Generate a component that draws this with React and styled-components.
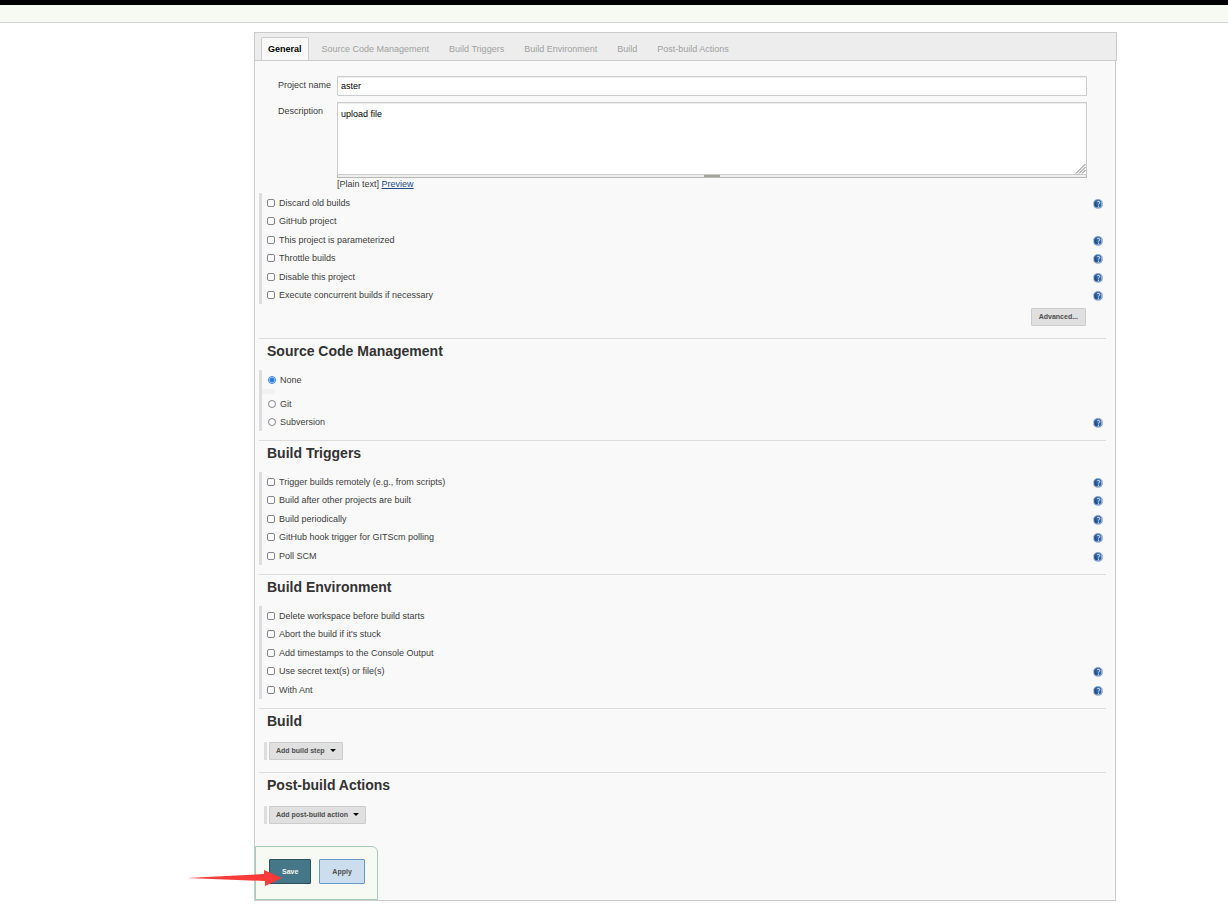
import React from 'react';
import styled, { createGlobalStyle } from 'styled-components';

const GlobalStyle = createGlobalStyle`
  * {
    box-sizing: border-box;
  }

  body {
    margin: 0;
    background: #fff;
    color: #3c3c3c;
    font-family: 'Liberation Sans', Arial, sans-serif;
    font-size: 9px;
    line-height: 12px;
  }

  button, input, textarea {
    font-family: inherit;
  }
`;

const TopBar = styled.header`
  height: 5px;
  background: #000;
`;

const Breadcrumbs = styled.nav`
  height: 18px;
  background: #f6faf2;
  border-bottom: 1px solid #d3d7cf;
`;

const Main = styled.main`
  margin: 9px 112px 10px 254px;
`;

const TabBar = styled.nav`
  display: flex;
  align-items: flex-end;
  gap: 6px;
  height: 29px;
  margin-right: -1px;
  padding-left: 6px;
  background: #ededed;
  border: 1px solid #ccc;
`;

const Tab = styled.a`
  height: 23px;
  padding: 0 6px;
  border: 1px solid ${props => (props.$active ? '#ccc' : 'transparent')};
  border-bottom: 0;
  border-radius: 2px 2px 0 0;
  background: ${props => (props.$active ? '#f9f9f9' : 'transparent')};
  color: ${props => (props.$active ? '#000' : '#a0a0a0')};
  font-weight: ${props => (props.$active ? 'bold' : 'normal')};
  line-height: 23px;
  text-decoration: none;
  white-space: nowrap;
`;

const Form = styled.form`
  padding: 15px 0 0;
  background: #f9f9f9;
  border: 1px solid #ccc;
  border-top: 0;
`;

const Fields = styled.div`
  display: grid;
  gap: 6px;
  margin: 0 28px 0 23px;
`;

const Field = styled.div`
  display: grid;
  grid-template-columns: 59px 1fr;
`;

const FieldLabel = styled.label`
  padding-top: 3px;
`;

const TextInput = styled.input`
  width: 100%;
  height: 20px;
  padding: 0 3px;
  border: 1px solid #ccc;
  border-radius: 1px;
  background: #fff;
  box-shadow: inset 0 1px 0 #eee;
  color: #000;
  font-size: 9px;
`;

const TextBox = styled.div`
  position: relative;
  height: 73px;
`;

const TextArea = styled.textarea`
  display: block;
  width: 100%;
  height: 100%;
  padding: 5px 3px;
  border: 1px solid #ccc;
  background: #fff;
  box-shadow: inset 0 1px 0 #eee;
  color: #000;
  font-size: 9px;
  line-height: 12px;
  resize: none;
`;

const Grip = styled.svg`
  position: absolute;
  right: 1px;
  bottom: 1px;
`;

const DragHandle = styled.div`
  height: 3px;
  border: 1px solid #b8b8b4;
  border-top: 0;
  background: linear-gradient(#a3a39c, #a3a39c) center / 16px 3px no-repeat #eee;
`;

const Format = styled.div`
  height: 15px;
  line-height: 13px;
`;

const PreviewLink = styled.a`
  color: #204a87;
`;

const Group = styled.div`
  margin: 0 8px 0 4px;
  padding-left: 5px;
  border-left: 3px solid #ddd;
`;

const Row = styled.div`
  display: flex;
  align-items: center;
  height: 19px;

  &:nth-child(even) {
    height: 18px;
  }
`;

const OptionLabel = styled.label`
  flex: 1;
`;

const Checkbox = styled.input`
  appearance: none;
  width: 8px;
  height: 8px;
  margin: 0 4px 0 0;
  border: 1px solid #85858f;
  border-radius: 2px;
  background: #fff;
`;

const Radio = styled(Checkbox)`
  margin-left: 1px;
  border-radius: 50%;

  &:checked {
    border-color: #2a7de1;
    background: radial-gradient(#2a7de1 2px, #fff 3px);
  }
`;

const HelpButton = styled.button`
  display: flex;
  margin: 2px 4px 0 0;
  padding: 0;
  border: 0;
  background: none;
`;

const Spacer = styled.div`
  height: 5px;
  width: 13px;
  margin-left: -5px;
  background: #f2f2f2;
`;

const Section = styled.section`
  padding-bottom: 9px;
`;

const SectionTitle = styled.h2`
  height: 32px;
  margin: 0 9px 0 4px;
  padding-left: 8px;
  border-top: 1px solid #ddd;
  color: #333;
  font-size: 14px;
  line-height: 25px;
`;

const Button = styled.button`
  height: 18px;
  padding: 0 6px;
  border: 1px solid #ccc;
  border-radius: 1px;
  background: #e0e0e0;
  color: #4d4d4d;
  font-size: 7px;
  font-weight: bold;
  line-height: 16px;
`;

const AdvancedBar = styled.div`
  display: flex;
  justify-content: flex-end;
  padding: 4px 29px 12px 0;
`;

const AdvancedButton = styled(Button)`
  padding: 0 7px;
`;

const Adder = styled.div`
  display: flex;
  margin: 2px 0 3px 9px;
  padding-left: 2px;
  border-left: 3px solid #ddd;
`;

const Caret = styled.span`
  display: inline-block;
  margin: 0 0 1px 3px;
  border: 3px solid transparent;
  border-top-color: #000;
  border-bottom: 0;
`;

const Footer = styled.footer`
  position: relative;
  display: flex;
  gap: 8px;
  width: fit-content;
  height: 54px;
  margin-top: 10px;
  padding: 12px 12px 0 13px;
  border: 1px solid #a6ccb8;
  border-radius: 0 6px 0 0;
  background: #f6faf2;
`;

const FooterButton = styled(Button)`
  height: 25px;
  padding: 0 12px;
  border-color: ${props => (props.$primary ? '#2d505e' : '#6699cc')};
  background: ${props => (props.$primary ? '#457789' : '#ccdded')};
  color: ${props => (props.$primary ? '#f6faf2' : '#4d4d4d')};
`;

const Arrow = styled.svg`
  position: absolute;
  left: -69px;
  top: 22px;
  pointer-events: none;
`;

const HelpIcon = () => (
  <svg width="10" height="10" viewBox="0 0 10 10" fill="none">
    <circle cx="5" cy="5" r="5" fill="#86a5cf" />
    <circle cx="4.800" cy="4.800" r="3.700" fill="#3465a4" />
    <path d="M.5 4v2.500M3.500 9.200h3.500M9 2.500v4" stroke="#b8cce4" />
    <path d="M2.500 3.500v3l1.500 1" stroke="#204a87" strokeWidth="1.500" />
    <path d="M4.200 3c.5-1 2.600-.8 2.600.5 0 1-1.300 1-1.300 2M5.500 6.700v1" stroke="#fff" />
  </svg>
);

const Option = ({ type, name, id, label, help, checked }) => {
  const Control = type === 'radio' ? Radio : Checkbox;

  return (
    <Row>
      <Control type={type || 'checkbox'} id={id} name={name} defaultChecked={checked} />
      <OptionLabel htmlFor={id}>{label}</OptionLabel>
      {help && (
        <HelpButton type="button" aria-label={`Help for ${label}`}>
          <HelpIcon />
        </HelpButton>
      )}
    </Row>
  );
};

const tabs = [
  'General',
  'Source Code Management',
  'Build Triggers',
  'Build Environment',
  'Build',
  'Post-build Actions',
];

const general = [
  { id: 'discard', label: 'Discard old builds', help: true },
  { id: 'github', label: 'GitHub project' },
  { id: 'params', label: 'This project is parameterized', help: true },
  { id: 'throttle', label: 'Throttle builds', help: true },
  { id: 'disable', label: 'Disable this project', help: true },
  { id: 'concurrent', label: 'Execute concurrent builds if necessary', help: true },
];

const triggers = [
  { id: 'remote', label: 'Trigger builds remotely (e.g., from scripts)', help: true },
  { id: 'after', label: 'Build after other projects are built', help: true },
  { id: 'periodic', label: 'Build periodically', help: true },
  { id: 'hook', label: 'GitHub hook trigger for GITScm polling', help: true },
  { id: 'poll', label: 'Poll SCM', help: true },
];

const environment = [
  { id: 'wipe', label: 'Delete workspace before build starts' },
  { id: 'abort', label: "Abort the build if it's stuck" },
  { id: 'timestamps', label: 'Add timestamps to the Console Output' },
  { id: 'secrets', label: 'Use secret text(s) or file(s)', help: true },
  { id: 'ant', label: 'With Ant', help: true },
];

const App = () => (
  <>
    <GlobalStyle />
    <TopBar />
    <Breadcrumbs />
    <Main>
      <TabBar>
        {tabs.map((tab, i) => (
          <Tab key={tab} href="#" $active={i === 0}>{tab}</Tab>
        ))}
      </TabBar>
      <Form onSubmit={e => e.preventDefault()}>
        <Fields>
          <Field>
            <FieldLabel htmlFor="name">Project name</FieldLabel>
            <TextInput id="name" type="text" defaultValue="aster" />
          </Field>
          <Field>
            <FieldLabel htmlFor="description">Description</FieldLabel>
            <div>
              <TextBox>
                <TextArea id="description" defaultValue="upload file" />
                <Grip width="11" height="11" viewBox="0 0 11 11" stroke="#777">
                  <path d="M1 10.500l9.500-9.500M4 10.500l6.500-6.500M7 10.500l3.500-3.500" />
                </Grip>
              </TextBox>
              <DragHandle />
              <Format>
                [Plain text] <PreviewLink href="#">Preview</PreviewLink>
              </Format>
            </div>
          </Field>
        </Fields>
        <Group>
          {general.map(item => <Option key={item.id} {...item} />)}
        </Group>
        <AdvancedBar>
          <AdvancedButton type="button">Advanced...</AdvancedButton>
        </AdvancedBar>

        <Section>
          <SectionTitle>Source Code Management</SectionTitle>
          <Group>
            <Option type="radio" name="scm" id="none" label="None" checked />
            <Spacer />
            <Option type="radio" name="scm" id="git" label="Git" />
            <Option type="radio" name="scm" id="svn" label="Subversion" help />
          </Group>
        </Section>

        <Section>
          <SectionTitle>Build Triggers</SectionTitle>
          <Group>
            {triggers.map(item => <Option key={item.id} {...item} />)}
          </Group>
        </Section>

        <Section>
          <SectionTitle>Build Environment</SectionTitle>
          <Group>
            {environment.map(item => <Option key={item.id} {...item} />)}
          </Group>
        </Section>

        <Section>
          <SectionTitle>Build</SectionTitle>
          <Adder>
            <Button type="button">Add build step <Caret /></Button>
          </Adder>
        </Section>

        <Section>
          <SectionTitle>Post-build Actions</SectionTitle>
          <Adder>
            <Button type="button">Add post-build action <Caret /></Button>
          </Adder>
        </Section>

        <Footer>
          <FooterButton type="submit" $primary>Save</FooterButton>
          <FooterButton type="button">Apply</FooterButton>
          <Arrow width="96" height="18" viewBox="0 0 96 18" fill="#fb3a3a">
            <path d="M0 9L77 5V1L95 9L78 17V12Z" />
          </Arrow>
        </Footer>
      </Form>
    </Main>
  </>
);

export default App;
